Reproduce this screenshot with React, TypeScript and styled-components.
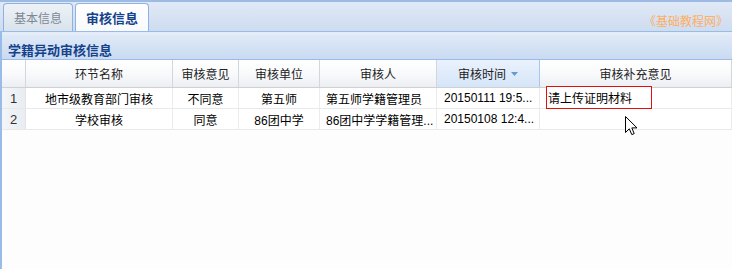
import React from 'react';
import styled, { createGlobalStyle } from 'styled-components';

const Global = createGlobalStyle`
  html, body { margin: 0; padding: 0; background: #fdfdfd; }
  body {
    font-family: "Liberation Sans", "Noto Sans CJK SC", sans-serif;
    font-size: 12px;
    color: #000;
  }
`;

const Page = styled.div`
  position: relative;
  width: 732px;
  height: 269px;
  overflow: hidden;
  display: flex;
  flex-direction: column;
  background: #fdfdfd;
`;

const TabStrip = styled.div`
  height: 31px;
  box-sizing: border-box;
  border-top: 2px solid #9dbbe3;
  background: linear-gradient(#e0e9f6, #cedcf0);
  display: flex;
  align-items: flex-end;
  padding-left: 3px;
  gap: 2px;
`;

const Tab = styled.div<{ $active?: boolean }>`
  height: 28px;
  box-sizing: border-box;
  padding: 0 10px 0 10px;
  border: 1px solid #8db2e3;
  border-bottom: none;
  border-radius: 4px 4px 0 0;
  display: flex;
  align-items: center;
  font-size: ${p => (p.$active ? '13px' : '12px')};
  font-weight: ${p => (p.$active ? 'bold' : 'normal')};
  color: ${p => (p.$active ? '#15428b' : '#7d8894')};
  background: ${p =>
    p.$active ? 'linear-gradient(#ffffff, #f7f9fc)' : 'linear-gradient(#edf2f7, #d9e3ec)'};
`;

const Watermark = styled.div`
  margin-left: auto;
  margin-right: 4px;
  margin-bottom: 2px;
  color: #ffae62;
  font-size: 12px;
  line-height: 14px;
`;

const Body = styled.div`
  flex: 1;
  display: flex;
  flex-direction: column;
  border-left: 2px solid #99bbe8;
  border-top: 1px solid #99bbe8;
`;

const Spacer = styled.div`
  height: 3px;
  background: #e4ecf7;
`;

const PanelHeader = styled.div`
  height: 25px;
  box-sizing: border-box;
  border-bottom: 1px solid #99bbe8;
  background: linear-gradient(#dfe9f7 0%, #d6e3f5 45%, #c9daf2 100%);
  display: flex;
  align-items: center;
  padding-left: 6px;
  padding-top: 4px;
  font-size: 13px;
  font-weight: bold;
  color: #15428b;
`;

const cols = '24px 147px 66px 81px 117px 103px 1fr';

const HeaderRow = styled.div`
  display: grid;
  grid-template-columns: ${cols};
  height: 28px;
  box-sizing: border-box;
  border-bottom: 1px solid #d0d0d0;
  background: linear-gradient(#ffffff 0%, #f8f9fb 55%, #ebeef3 100%);
`;

const HeaderCell = styled.div<{ $sorted?: boolean }>`
  display: flex;
  align-items: center;
  justify-content: center;
  gap: 5px;
  border-right: 1px solid ${p => (p.$sorted ? '#a9c6ee' : '#d3d6db')};
  color: #222;
  font-size: 12px;
  background: ${p => (p.$sorted ? 'linear-gradient(#eaf2fc, #d5e5f9)' : 'transparent')};
`;

const Row = styled.div`
  display: grid;
  grid-template-columns: ${cols};
  height: 21px;
  box-sizing: border-box;
  border-bottom: 1px solid #e8e9eb;
  background: #fff;
`;

const Cell = styled.div<{ $align?: 'left' | 'center'; $pad?: number }>`
  position: relative;
  display: flex;
  align-items: center;
  justify-content: ${p => (p.$align === 'left' ? 'flex-start' : 'center')};
  padding-left: ${p => p.$pad ?? 0}px;
  border-right: 1px solid #ececec;
  white-space: nowrap;
  overflow: visible;
  font-size: 12px;
  color: #000;
`;

const NumCell = styled.div`
  display: flex;
  align-items: center;
  justify-content: center;
  background: linear-gradient(to right, #f3f5f8, #e9edf2);
  border-right: 1px solid #e1e4e8;
  color: #333;
  font-size: 13px;
`;

const Editor = styled.div`
  position: absolute;
  left: 6px;
  top: -2px;
  width: 106px;
  height: 23px;
  box-sizing: border-box;
  border: 1px solid #e01010;
  background: #fff;
  display: flex;
  align-items: center;
  padding-left: 1px;
  font-size: 12px;
  color: #000;
  z-index: 2;
`;

const Cursor = styled.svg`
  position: absolute;
  left: 625px;
  top: 116px;
  z-index: 3;
`;

const SortArrow = () => (
  <svg width="7" height="4" viewBox="0 0 7 4">
    <path d="M0 0 L7 0 L3.5 4 Z" fill="#6a97d4" />
  </svg>
);

const rows = [
  ['地市级教育部门审核', '不同意', '第五师', '第五师学籍管理员', '20150111 19:5...'],
  ['学校审核', '同意', '86团中学', '86团中学学籍管理...', '20150108 12:4...'],
];

export default function App() {
  return (
    <Page>
      <Global />
      <TabStrip>
        <Tab>基本信息</Tab>
        <Tab $active>审核信息</Tab>
        <Watermark>《基础教程网》</Watermark>
      </TabStrip>
      <Body>
        <Spacer />
        <PanelHeader>学籍异动审核信息</PanelHeader>
        <HeaderRow>
          <HeaderCell />
          <HeaderCell>环节名称</HeaderCell>
          <HeaderCell>审核意见</HeaderCell>
          <HeaderCell>审核单位</HeaderCell>
          <HeaderCell>审核人</HeaderCell>
          <HeaderCell $sorted>
            审核时间
            <SortArrow />
          </HeaderCell>
          <HeaderCell>审核补充意见</HeaderCell>
        </HeaderRow>
        {rows.map((r, i) => (
          <Row key={i}>
            <NumCell>{i + 1}</NumCell>
            <Cell>{r[0]}</Cell>
            <Cell>{r[1]}</Cell>
            <Cell>{r[2]}</Cell>
            <Cell $align="left" $pad={6}>{r[3]}</Cell>
            <Cell $align="left" $pad={7}>{r[4]}</Cell>
            <Cell $align="left">
              {i === 0 && <Editor>请上传证明材料</Editor>}
            </Cell>
          </Row>
        ))}
      </Body>
      <Cursor width="13" height="20" viewBox="0 0 13 20">
        <path
          d="M0.5 0.5 L0.5 16.5 L4.3 12.8 L6.8 18.6 L9.2 17.6 L6.8 11.9 L12 11.9 Z"
          fill="#fff"
          stroke="#000"
          strokeWidth="1"
          strokeLinejoin="miter"
        />
      </Cursor>
    </Page>
  );
}
